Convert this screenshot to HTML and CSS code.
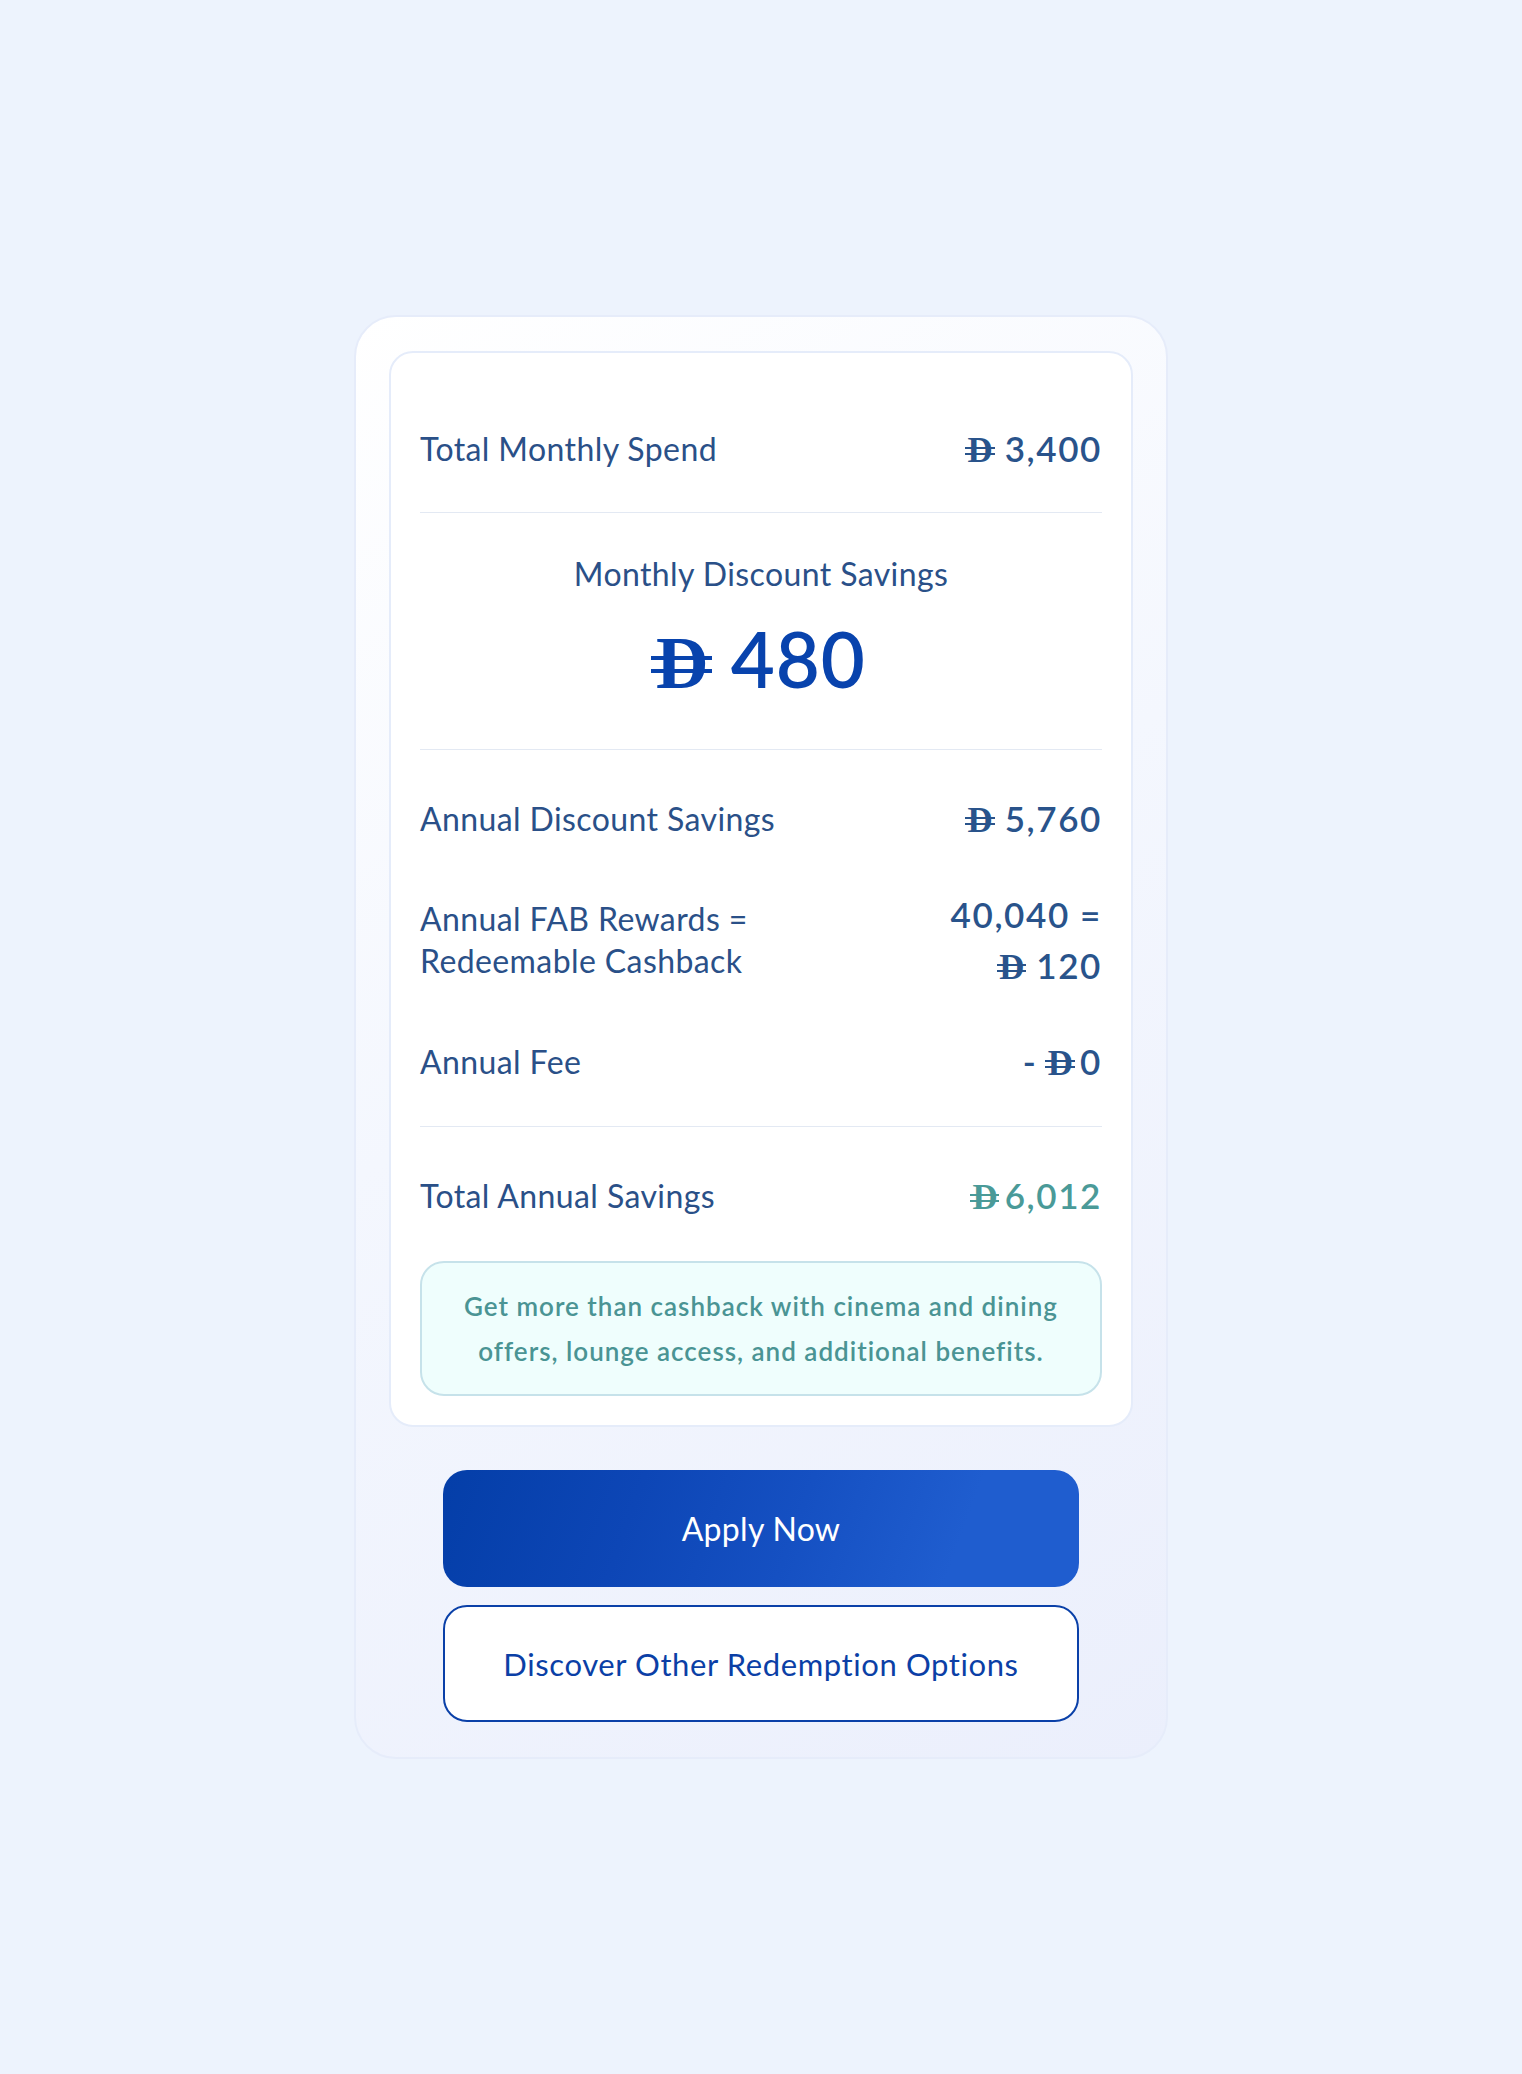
FILE: index.html
```html
<!DOCTYPE html>
<html lang="en">
<head>
    <meta charset="UTF-8">
    <meta name="viewport" content="width=device-width, initial-scale=1.0">
    <title>Savings Calculator | Results</title>
    <link rel="stylesheet" href="styles.css">
</head>
<body>

    <!-- Results Card -->
    <main class="calc-card">

        <section class="summary">
            <!-- Monthly Spend -->
            <div class="row row-top">
                <span class="label">Total Monthly Spend</span>
                <span class="value"><span class="aed">D</span>3,400</span>
            </div>

            <!-- Monthly Savings -->
            <div class="highlight">
                <p class="highlight-label">Monthly Discount Savings</p>
                <p class="highlight-value"><span class="aed">D</span>480</p>
            </div>

            <!-- Breakdown -->
            <div class="breakdown">
                <div class="row">
                    <span class="label">Annual Discount Savings</span>
                    <span class="value"><span class="aed">D</span>5,760</span>
                </div>
                <div class="row">
                    <span class="label label-multi">Annual FAB Rewards =<br>Redeemable Cashback</span>
                    <span class="value">40,040 =<br><span class="aed">D</span>120</span>
                </div>
                <div class="row">
                    <span class="label">Annual Fee</span>
                    <span class="value">- <span class="aed aed-tight">D</span>0</span>
                </div>
            </div>

            <!-- Total -->
            <div class="row row-total">
                <span class="label">Total Annual Savings</span>
                <span class="value value-teal"><span class="aed aed-tight">D</span>6,012</span>
            </div>

            <p class="note">Get more than cashback with cinema and dining<br>offers, lounge access, and additional benefits.</p>
        </section>

        <!-- Buttons -->
        <div class="actions">
            <a href="#" class="btn btn-primary">Apply Now</a>
            <a href="#" class="btn btn-outline">Discover Other Redemption Options</a>
        </div>

    </main>

</body>
</html>
```

FILE: styles.css
```css
/* Page */
body {
    margin: 0;
    min-height: 100vh;
    display: flex;
    align-items: center;
    justify-content: center;
    background-color: #edf3fd;
    font-family: Lato, "Liberation Sans", sans-serif;
}

/* Outer Card */
.calc-card {
    width: 814px;
    box-sizing: border-box;
    padding: 34px 33px 35px;
    border: 2px solid #e6ecfa;
    border-radius: 42px;
    background: linear-gradient(150deg, #ffffff 0%, #f4f7fe 45%, #ebeffc 100%);
}

/* Inner White Card */
.summary {
    background-color: #fff;
    border: 2px solid #e5ecfa;
    border-radius: 24px;
    padding: 29px;
}

.row {
    display: flex;
    justify-content: space-between;
    align-items: center;
}

.label {
    font-size: 32px;
    line-height: 1.5;
    letter-spacing: 0.4px;
    color: #2a5088;
}

.label-multi {
    line-height: 42px;
}

.value {
    font-size: 35px;
    line-height: 51px;
    font-weight: 600;
    letter-spacing: 1.6px;
    color: #29538b;
    text-align: right;
}

.value-teal {
    color: #4a9a98;
}

/* Dirham sign */
.aed {
    position: relative;
    font-family: "Liberation Serif", serif;
    font-weight: 700;
    font-size: 1em;
    line-height: 1;
    letter-spacing: 0;
    margin-right: 0.34em;
}

.aed-tight {
    margin-right: 0.2em;
}

.aed::before,
.aed::after {
    content: "";
    position: absolute;
    left: -0.07em;
    right: -0.05em;
    height: 0.06em;
    background-color: currentColor;
}

.aed::before {
    top: 0.45em;
}

.aed::after {
    top: 0.63em;
}

.row-top {
    padding: 41px 0 38px;
    border-bottom: 1px solid #e3e9f3;
}

/* Monthly Savings */
.highlight {
    padding: 38px 0 45px;
    text-align: center;
    border-bottom: 1px solid #e3e9f3;
}

.highlight-label {
    margin: 0;
    font-size: 32px;
    line-height: 46px;
    letter-spacing: 0.4px;
    color: #2a5088;
}

.highlight-value {
    margin: 17px 0 0;
    font-size: 76px;
    line-height: 90px;
    font-weight: 600;
    letter-spacing: 1px;
    color: #0843ad;
}

.highlight-value .aed {
    font-size: 0.96em;
    margin-right: 0.3em;
}

/* Breakdown */
.breakdown {
    display: flex;
    flex-direction: column;
    gap: 45px;
    padding: 43px 0 39px;
    border-bottom: 1px solid #e3e9f3;
}

.row-total {
    padding-top: 43px;
}

/* Info Note */
.note {
    margin: 40px 0 0;
    padding: 20.5px 10px;
    border: 2px solid #c6e2ea;
    border-radius: 24px;
    background-color: #effefd;
    color: #4a9494;
    font-size: 26px;
    font-weight: 600;
    line-height: 45px;
    letter-spacing: 1px;
    text-align: center;
}

/* Buttons */
.actions {
    display: flex;
    flex-direction: column;
    gap: 18px;
    padding: 43px 54px 0;
}

.btn {
    height: 117px;
    box-sizing: border-box;
    display: flex;
    align-items: center;
    justify-content: center;
    border-radius: 24px;
    font-size: 32px;
    letter-spacing: 0.3px;
    text-decoration: none;
}

.btn-primary {
    background: linear-gradient(110deg, #043ea8 0%, #0d46b6 30%, #1550c2 55%, #1f5dcf 80%, #1f5dcf 100%);
    color: #fff;
}

.btn-outline {
    background-color: #fff;
    border: 2px solid #0a40a8;
    color: #0b3fa6;
    font-size: 31px;
    letter-spacing: 0.6px;
}
```
